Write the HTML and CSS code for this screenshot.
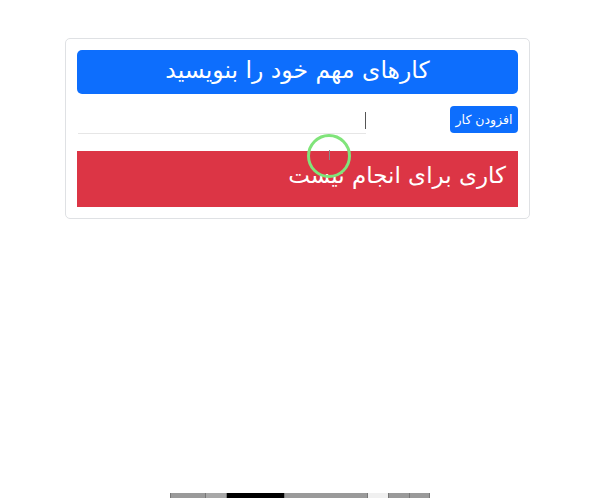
FILE: index.html
```html
<!DOCTYPE html>
<html lang="fa">
<head>
<meta charset="utf-8">
<link rel="stylesheet" href="styles.css">
</head>
<body>
<div class="page">
  <div class="card" dir="rtl">
    <div class="title">کارهای مهم خود را بنویسید</div>
    <div class="form-row">
      <button class="add-btn">افزودن کار</button>
      <div class="input-box"><span class="caret"></span></div>
    </div>
    <div class="empty">کاری برای انجام نیست</div>
  </div>
</div>
<div class="cursor-ring"><span class="ibeam"></span></div>
<div class="taskbar">
  <span class="seg s1"></span><span class="seg s2"></span><span class="seg s3"></span><span class="seg s4"></span><span class="seg s5"></span><span class="seg s6"></span><span class="seg s7"></span>
</div>
</body>
</html>
```
FILE: styles.css
```css
html, body {
  margin: 0;
  padding: 0;
  background: #fff;
  font-family: "DejaVu Sans", "Noto Sans", sans-serif;
}
.page {
  width: 600px;
  height: 498px;
  padding-top: 38px;
  box-sizing: border-box;
}
.card {
  margin-left: 65px;
  width: 465px;
  height: 181px;
  box-sizing: border-box;
  border: 1px solid #dfe1e4;
  border-radius: 5px;
  padding: 11px 11px 0 11px;
}
.title {
  height: 44px;
  background: #0d6efd;
  color: #fff;
  border-radius: 5px;
  font-size: 23.5px;
  line-height: 40px;
  text-align: center;
}
.form-row {
  display: flex;
  align-items: flex-start;
  height: 57px;
  padding-top: 12px;
  box-sizing: border-box;
}
.add-btn {
  width: 68px;
  height: 27px;
  background: #0d6efd;
  color: #fff;
  border: 0;
  border-radius: 4px;
  font-family: "DejaVu Sans", sans-serif;
  font-size: 12.5px;
  padding: 0;
  line-height: 25px;
}
.input-box {
  margin-right: 84px;
  width: 288px;
  height: 27px;
  border-bottom: 1px solid #e6e6e6;
  position: relative;
}
.caret {
  position: absolute;
  right: 0;
  top: 6px;
  width: 1px;
  height: 17px;
  background: #555;
}
.empty {
  height: 56px;
  background: #dc3545;
  color: #fff;
  font-size: 23px;
  line-height: 48px;
  padding-right: 12px;
  text-align: right;
}
.cursor-ring {
  position: absolute;
  left: 307px;
  top: 134px;
  width: 38px;
  height: 38px;
  border: 3px solid #80e47a;
  border-radius: 50%;
}
.ibeam {
  position: absolute;
  left: 19px;
  top: 13px;
  width: 1px;
  height: 10px;
  background: #888;
}
.taskbar {
  position: absolute;
  left: 170px;
  top: 493px;
  width: 260px;
  height: 5px;
  display: flex;
}
.seg { height: 5px; border-left: 1px solid #777; box-sizing: border-box; }
.s1 { width: 35px; background: #9a9a9a; }
.s2 { width: 21px; background: #a8a8a8; }
.s3 { width: 58px; background: #000; }
.s4 { width: 83px; background: #9a9a9a; }
.s5 { width: 21px; background: #f0f0f0; }
.s6 { width: 21px; background: #9a9a9a; }
.s7 { width: 21px; background: #9a9a9a; border-right: 1px solid #777; }
```
